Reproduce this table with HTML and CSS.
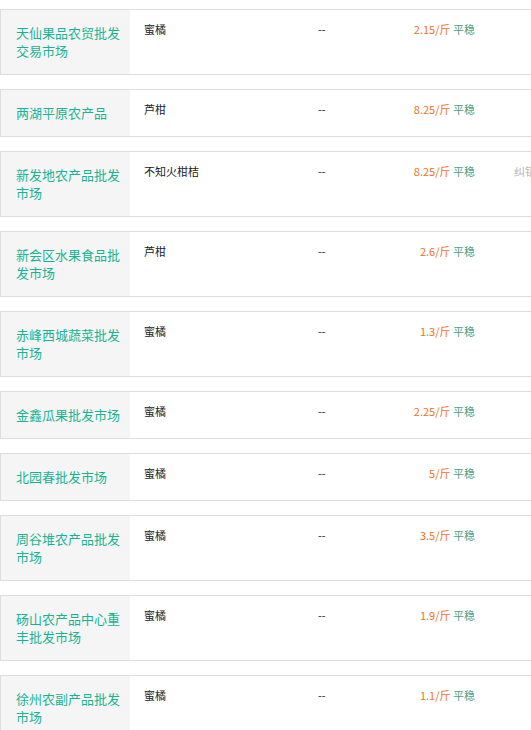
FILE: index.html
```html
<!DOCTYPE html>
<html lang="zh">
<head>
<meta charset="utf-8">
<link rel="stylesheet" href="styles.css">
</head>
<body>
<div class="list">
  <div class="row"><div class="market">天仙果品农贸批发交易市场</div><div class="variety">蜜橘</div><div class="spec">--</div><div class="price"><span class="num">2.15/斤</span> <span class="trend">平稳</span></div></div>
  <div class="row"><div class="market">两湖平原农产品</div><div class="variety">芦柑</div><div class="spec">--</div><div class="price"><span class="num">8.25/斤</span> <span class="trend">平稳</span></div></div>
  <div class="row"><div class="market">新发地农产品批发市场</div><div class="variety">不知火柑桔</div><div class="spec">--</div><div class="price"><span class="num">8.25/斤</span> <span class="trend">平稳</span></div><div class="report">纠错</div></div>
  <div class="row"><div class="market">新会区水果食品批发市场</div><div class="variety">芦柑</div><div class="spec">--</div><div class="price"><span class="num">2.6/斤</span> <span class="trend">平稳</span></div></div>
  <div class="row"><div class="market">赤峰西城蔬菜批发市场</div><div class="variety">蜜橘</div><div class="spec">--</div><div class="price"><span class="num">1.3/斤</span> <span class="trend">平稳</span></div></div>
  <div class="row"><div class="market">金鑫瓜果批发市场</div><div class="variety">蜜橘</div><div class="spec">--</div><div class="price"><span class="num">2.25/斤</span> <span class="trend">平稳</span></div></div>
  <div class="row"><div class="market">北园春批发市场</div><div class="variety">蜜橘</div><div class="spec">--</div><div class="price"><span class="num">5/斤</span> <span class="trend">平稳</span></div></div>
  <div class="row"><div class="market">周谷堆农产品批发市场</div><div class="variety">蜜橘</div><div class="spec">--</div><div class="price"><span class="num">3.5/斤</span> <span class="trend">平稳</span></div></div>
  <div class="row"><div class="market">砀山农产品中心重丰批发市场</div><div class="variety">蜜橘</div><div class="spec">--</div><div class="price"><span class="num">1.9/斤</span> <span class="trend">平稳</span></div></div>
  <div class="row"><div class="market">徐州农副产品批发市场</div><div class="variety">蜜橘</div><div class="spec">--</div><div class="price"><span class="num">1.1/斤</span> <span class="trend">平稳</span></div></div>
</div>
</body>
</html>
```
FILE: styles.css
```css
html, body {
  margin: 0;
  padding: 0;
  overflow: hidden;
  background: #fff;
}
body {
  font-family: "Noto Sans CJK SC", "Noto Sans", sans-serif;
  color: #333;
}
.list {
  padding-top: 9px;
  width: 600px;
}
.row {
  display: flex;
  align-items: stretch;
  border: 1px solid #ddd;
  margin-bottom: 14px;
}
.market {
  width: 114px;
  flex: none;
  padding: 14px 0 14px 15px;
  background: #f5f5f5;
  color: #17b392;
  font-size: 13px;
  line-height: 18px;
}
.variety {
  width: 160px;
  flex: none;
  padding: 13px 0 0 14px;
  font-size: 11px;
  line-height: 12px;
  color: #222;
}
.spec {
  width: 60px;
  flex: none;
  padding: 13px 0 0 14px;
  font-size: 11px;
  line-height: 12px;
  color: #222;
}
.price {
  width: 97px;
  flex: none;
  padding-top: 13px;
  text-align: right;
  font-size: 11px;
  line-height: 12px;
  white-space: nowrap;
}
.num {
  color: #f37021;
}
.trend {
  color: #4f9e7f;
}
.report {
  margin-left: 39px;
  padding-top: 13px;
  font-size: 11px;
  line-height: 12px;
  color: #b5b5b5;
}
```
